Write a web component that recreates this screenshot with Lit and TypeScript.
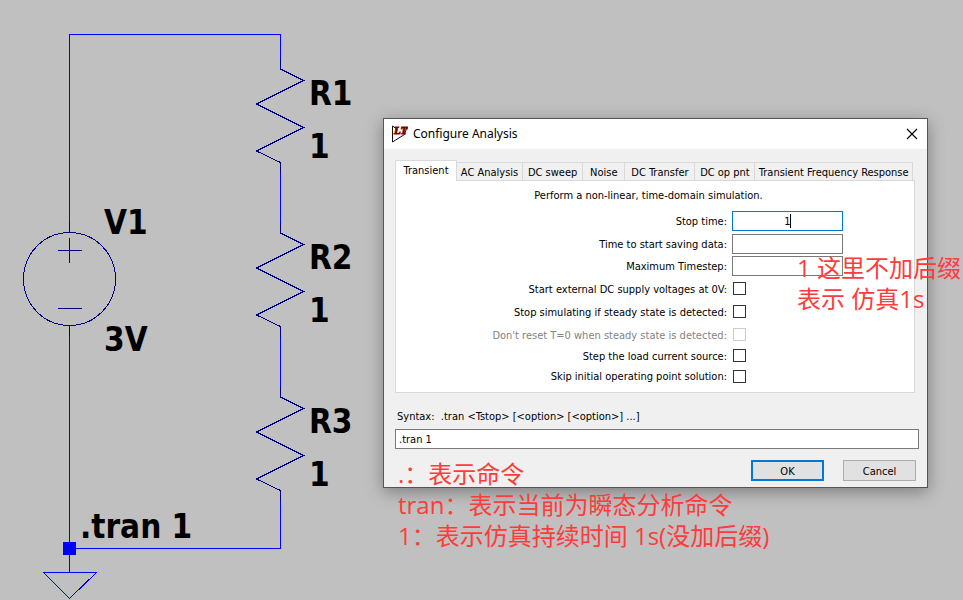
import { LitElement, html, svg, css } from "lit";
import { customElement } from "lit/decorators.js";
import { styleMap } from "lit/directives/style-map.js";
import { classMap } from "lit/directives/class-map.js";

@customElement("circuit-schematic")
class CircuitSchematic extends LitElement {
  static styles = css`
    :host { display: block; }
    .canvas { display: block; width: 100%; height: 100%; }
    .wire, .part { fill: none; stroke-width: 1px; shape-rendering: crispEdges; }
    .wire { stroke: #0000ff; }
    .part { stroke: #000080; }
    .node { fill: #0000ff; }
    .label { font: bold 33px "DejaVu Sans Condensed", "DejaVu Sans", sans-serif; fill: #000; }
  `;

  private resistor(name: string, top: number) {
    return svg`
      <path class="part" d="M280.5 ${top - 10}v10l23 11.5l-47 23.5l47 23.5l-47 23.5l24 11.5v10.5"></path>
      <text class="label" x="309" y=${top + 36}>${name}</text>
      <text class="label" x="309" y=${top + 89}>1</text>`;
  }

  render() {
    return html`
      <svg class="canvas" role="img" aria-label="Circuit schematic">
        <path class="wire" d="M69.5 222V34.5H280.5V59M280.5 173V223M280.5 337V387M280.5 501V548.5H69.5M69.5 337V572.5"></path>
        <path class="wire" d="M43.5 572.5H96.5L69.5 598.5Z"></path>
        <rect class="node" x="63" y="542" width="13" height="13"></rect>
        <ellipse class="part" cx="69.5" cy="279" rx="46" ry="46.5"></ellipse>
        <path class="part" d="M69.5 222V232M69.5 325V337M58 250.5H82M69.5 238V263M58 308.5H82"></path>
        ${this.resistor("R1", 69)}
        ${this.resistor("R2", 233)}
        ${this.resistor("R3", 397)}
        <text class="label" x="104" y="234">V1</text>
        <text class="label" x="104" y="351">3V</text>
        <text class="label" x="80" y="538">.tran 1</text>
      </svg>`;
  }
}

const TABS = [
  { name: "Transient", share: 61 },
  { name: "AC Analysis", share: 66 },
  { name: "DC sweep", share: 60 },
  { name: "Noise", share: 42 },
  { name: "DC Transfer", share: 70 },
  { name: "DC op pnt", share: 60 },
  { name: "Transient Frequency Response", share: 159 },
];

const OPTIONS = [
  { id: "ext", label: "Start external DC supply voltages at 0V:", off: false },
  { id: "steady", label: "Stop simulating if steady state is detected:", off: false },
  { id: "reset", label: "Don't reset T=0 when steady state is detected:", off: true },
  { id: "step", label: "Step the load current source:", off: false },
  { id: "skip", label: "Skip initial operating point solution:", off: false },
];

@customElement("analysis-dialog")
class AnalysisDialog extends LitElement {
  static styles = css`
    :host {
      display: block;
      box-sizing: border-box;
      border: 1px solid #555;
      background: #f0f0f0;
      box-shadow: 0 4px 16px rgba(0, 0, 0, 0.35);
      color: #000;
      font: 11px/14px "DejaVu Sans Condensed", "DejaVu Sans", sans-serif;
    }
    * { box-sizing: border-box; }
    .title { display: flex; align-items: center; height: 30px; padding: 0 8px; background: #fff; }
    .logo { width: 16px; height: 18px; margin-right: 5px; }
    .logo-text { font: italic bold 11px "Liberation Serif", serif; fill: #800000; stroke: #800000; stroke-width: 1px; }
    .name { flex: 1; margin: 0; font: 12px/16px "Noto Sans", sans-serif; }
    .close { display: flex; padding: 1px; border: 0; background: none; }
    .body { padding: 11px 8px 6px 11px; }
    .tabs { display: flex; align-items: flex-end; height: 20px; padding-right: 6px; }
    .tab {
      flex: 1 1 0; min-width: 0; height: 18px; padding: 2px 0 0;
      border: 1px solid #d9d9d9; border-left: 0; border-bottom: 0;
      background: #f0f0f0; color: inherit; font: inherit; white-space: nowrap;
    }
    .tab.on { height: 21px; margin-bottom: -1px; padding: 0; border-left: 1px solid #d9d9d9; background: #fff; }
    .panel { margin-right: 4px; padding: 8px 71px 5px 0; border: 1px solid #d9d9d9; background: #fff; }
    .intro { margin: 0 -58px 7px 0; text-align: center; }
    .fields {
      display: grid; grid-template-columns: 1fr 111px; column-gap: 5px; align-items: center;
      grid-template-rows: 22px 23px 22px 23px 23px 23px 19px 22px;
    }
    .fields label { padding-top: 2px; text-align: right; white-space: nowrap; }
    .fields label.off { color: #838383; }
    .box { position: relative; display: flex; }
    .text {
      width: 100%; height: 20px; padding: 0 3px; border: 1px solid #7a7a7a; border-radius: 0;
      background: #fff; color: #000; font: inherit; outline: 0;
    }
    .box .text { text-align: center; }
    .text.active { border-color: #0078d7; }
    .caret { position: absolute; top: 3px; left: 58px; width: 1px; height: 14px; background: #000; }
    .check {
      appearance: none; width: 13px; height: 13px; margin: 0 0 0 1px;
      border: 1px solid #333; background: #fff;
    }
    .check:disabled { border-color: #ccc; }
    .syntax { display: block; margin: 17px 2px 5px; white-space: pre; }
    .actions { display: flex; justify-content: flex-end; gap: 19px; margin: 11px 3px 0 0; }
    .action { width: 73px; height: 21px; padding: 2px 0 0; border: 1px solid #adadad; background: #e1e1e1; color: #000; font: inherit; }
    .action.main { border: 2px solid #0078d7; }
  `;

  render() {
    return html`
      <header class="title">
        <svg class="logo" viewBox="0 0 16 18" aria-hidden="true">
          <path d="M0.5 1V17L12.5 9.5L15 2M0.5 1L5 4" fill="none" stroke="#111"></path>
          <text class="logo-text" x="2" y="9">LT</text>
        </svg>
        <h1 class="name">Configure Analysis</h1>
        <button class="close" aria-label="Close">
          <svg width="12" height="12" viewBox="0 0 12 12"><path d="M1 1L11 11M11 1L1 11" stroke="#000" stroke-width="1.1"></path></svg>
        </button>
      </header>
      <div class="body">
        <div class="tabs" role="tablist">
          ${TABS.map((t, i) => html`<button role="tab" aria-selected=${i === 0}
            class=${classMap({ tab: true, on: i === 0 })} style=${styleMap({ flexGrow: String(t.share) })}>${t.name}</button>`)}
        </div>
        <div class="panel" role="tabpanel">
          <p class="intro">Perform a non-linear, time-domain simulation.</p>
          <div class="fields">
            <label for="stop">Stop time:</label>
            <div class="box"><input class="text active" id="stop" value="1"><span class="caret"></span></div>
            <label for="start">Time to start saving data:</label>
            <div class="box"><input class="text" id="start"></div>
            <label for="max">Maximum Timestep:</label>
            <div class="box"><input class="text" id="max"></div>
            ${OPTIONS.map((o) => html`
              <label for=${o.id} class=${classMap({ off: o.off })}>${o.label}</label>
              <input class="check" type="checkbox" id=${o.id} ?disabled=${o.off}>`)}
          </div>
        </div>
        <label class="syntax" for="command">Syntax:  .tran &lt;Tstop&gt; [&lt;option&gt; [&lt;option&gt;] ...]</label>
        <input class="text" id="command" value=".tran 1">
        <div class="actions">
          <button class="action main">OK</button>
          <button class="action">Cancel</button>
        </div>
      </div>`;
  }
}

@customElement("app-root")
class AppRoot extends LitElement {
  static styles = css`
    :host { display: block; position: relative; height: 100vh; overflow: hidden; background: #c0c0c0; }
    .schematic { height: 100%; }
    .dialog { position: absolute; top: 118px; left: 383px; right: 35px; }
    .note {
      position: absolute; margin: 0; color: #ff3b3b; white-space: nowrap;
      font: 24px/31px "Open Sans", "Noto Sans CJK SC", sans-serif;
    }
    .suffix { top: 252px; left: 797px; }
    .explain { top: 458px; left: 398px; }
  `;

  render() {
    return html`
      <circuit-schematic class="schematic"></circuit-schematic>
      <analysis-dialog class="dialog"></analysis-dialog>
      <p class="note suffix">1 这里不加后缀<br>表示 仿真1s</p>
      <p class="note explain">.：表示命令<br>tran：表示当前为瞬态分析命令<br>1：表示仿真持续时间 1s(没加后缀)</p>`;
  }
}
